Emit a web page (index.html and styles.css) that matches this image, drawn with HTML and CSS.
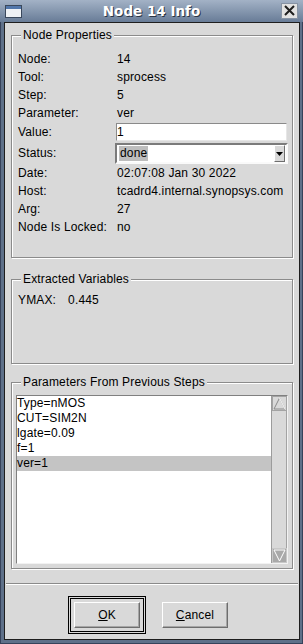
FILE: index.html
```html
<!DOCTYPE html>
<html lang="en">
<head>
  <meta charset="UTF-8">
  <meta name="viewport" content="width=device-width, initial-scale=1.0">
  <title>Node 14 Info</title>
  <link rel="stylesheet" href="styles.css">
</head>
<body>

  <div class="window">
    <!-- Title bar -->
    <div class="titlebar">
      <svg class="win-icon" width="17" height="13" viewBox="0 0 17 13">
        <rect x="0.5" y="0.5" width="16" height="12" fill="#eef1f5" stroke="#3a485c"/>
        <rect x="1" y="1" width="15" height="3" fill="#5277ab"/>
      </svg>
      <span class="title">Node 14 Info</span>
      <svg class="close-btn" width="17" height="16" viewBox="0 0 17 16">
        <rect x="0.5" y="0.5" width="16" height="15" fill="#e2e2e2" stroke="#8793a4"/>
        <path d="M4 3 L13 12 M13 3 L4 12" stroke="#1e1e1e" stroke-width="2"/>
      </svg>
    </div>

    <div class="client">
      <!-- Node Properties -->
      <fieldset class="group props">
        <legend>Node Properties</legend>
        <div class="prop-grid">
          <span>Node:</span><span class="val">14</span>
          <span>Tool:</span><span class="val">sprocess</span>
          <span>Step:</span><span class="val">5</span>
          <span>Parameter:</span><span class="val">ver</span>
          <span>Value:</span><div class="text-input">1</div>
          <span>Status:</span>
          <div class="select">
            <span class="sel-text">done</span>
            <span class="arrow-btn">
              <svg width="7" height="4" viewBox="0 0 7 4"><path d="M0 0 H7 L3.5 4 Z" fill="#000"/></svg>
            </span>
          </div>
          <span>Date:</span><span class="val">02:07:08 Jan 30 2022</span>
          <span>Host:</span><span class="val">tcadrd4.internal.synopsys.com</span>
          <span>Arg:</span><span class="val">27</span>
          <span>Node Is Locked:</span><span class="val">no</span>
        </div>
      </fieldset>

      <!-- Extracted Variables -->
      <fieldset class="group extracted">
        <legend>Extracted Variables</legend>
        <div class="var-line"><span>YMAX:</span><span class="var-val">0.445</span></div>
      </fieldset>

      <!-- Parameters From Previous Steps -->
      <fieldset class="group params">
        <legend>Parameters From Previous Steps</legend>
        <div class="listbox">
          <div class="items">
            <div class="item">Type=nMOS</div>
            <div class="item">CUT=SIM2N</div>
            <div class="item">lgate=0.09</div>
            <div class="item">f=1</div>
            <div class="item selected">ver=1</div>
          </div>
          <div class="scrollbar">
            <svg class="sb-btn" width="15" height="15" viewBox="0 0 15 15">
              <rect x="0.5" y="0.5" width="14" height="14" fill="#d9d9d9" stroke="#a3a3a3"/>
              <path d="M7.5 2 L13 13 H2 Z" fill="none" stroke="#8a8a8a"/>
              <path d="M7.5 2 L13 13" fill="none" stroke="#fff"/>
            </svg>
            <div class="sb-trough"></div>
            <svg class="sb-btn" width="15" height="15" viewBox="0 0 15 15">
              <rect x="0.5" y="0.5" width="14" height="14" fill="#a9a9a9" stroke="#c8c8c8"/>
              <path d="M2 2 H13 L7.5 13 Z" fill="none" stroke="#fff"/>
            </svg>
          </div>
        </div>
      </fieldset>

      <div class="sep"></div>

      <!-- Buttons -->
      <div class="buttons">
        <div class="default-ring">
          <div class="ring-inner">
            <button class="btn"><u>O</u>K</button>
          </div>
        </div>
        <button class="btn cancel"><u>C</u>ancel</button>
      </div>
    </div>
  </div>

</body>
</html>
```

FILE: styles.css
```css
body {
  margin: 0;
  padding: 0;
  font-family: "Liberation Sans", Arial, sans-serif;
  font-size: 12px;
  letter-spacing: 0.15px;
  color: #000;
}

.window {
  width: 303px;
  height: 644px;
  box-sizing: border-box;
  background-color: #5e7089;
  box-shadow: inset 1px 0 0 #36425a, inset -1px -1px 0 #36425a;
  display: flex;
  flex-direction: column;
}

/* Title bar */
.titlebar {
  height: 22px;
  flex: none;
  display: flex;
  align-items: center;
  padding: 0 5px;
  background: linear-gradient(#a3b2c6, #687c97);
}

.win-icon,
.close-btn {
  flex: none;
  display: block;
}

.title {
  flex: 1;
  text-align: center;
  color: #fff;
  font-family: "DejaVu Sans", sans-serif;
  font-weight: bold;
  font-size: 13.5px;
  letter-spacing: 0;
  text-shadow: 1px 1px 0 #2b3545;
}

/* Client area */
.client {
  flex: 1;
  margin: 0 3px 4px 4px;
  border: 1px solid #1e1e1e;
  background-color: #d9d9d9;
  display: flex;
  flex-direction: column;
}

.group {
  box-sizing: border-box;
  margin: 0 6px;
  border: 1px solid #8b8b8b;
  box-shadow: inset 1px 1px 0 #fff, 1px 1px 0 #fff;
  min-width: 0;
}

.group legend {
  padding: 0 2px;
  margin-left: 3px;
  line-height: 14px;
  background-color: #d9d9d9;
}

.props {
  margin-top: 5px;
  height: 230px;
  padding: 8px 5px 0 6px;
}

.extracted {
  margin-top: 14px;
  height: 92px;
  padding: 5px 6px 0 6px;
}

.params {
  margin-top: 11px;
  height: 194px;
  padding: 6px 4px 0 4px;
}

.params legend {
  margin-left: 5px;
}

/* Property rows */
.prop-grid {
  display: grid;
  grid-template-columns: 98px 1fr;
  grid-template-rows: 18px 18px 18px 18px 20px 22px 18px 18px 18px 18px;
  align-items: center;
}

.prop-grid .val {
  padding-left: 1px;
}

.text-input {
  height: 18px;
  box-sizing: border-box;
  border: 1px solid;
  border-color: #8a8a8a #e6e6e6 #e6e6e6 #8a8a8a;
  background-color: #fff;
  line-height: 16px;
}

.select {
  align-self: start;
  margin: 1px -1px 0 -1px;
  height: 21px;
  box-sizing: border-box;
  border: 2px solid;
  border-color: #7b7b7b #fafafa #fafafa #7b7b7b;
  background-color: #fff;
  display: flex;
  align-items: center;
  padding-left: 2px;
}

.sel-text {
  background-color: #bdbdbd;
  padding: 0 1px;
  line-height: 15px;
}

.arrow-btn {
  margin-left: auto;
  margin-right: 1px;
  width: 11px;
  height: 17px;
  box-sizing: border-box;
  background-color: #d9d9d9;
  border: 1px solid;
  border-color: #fff #6e6e6e #6e6e6e #fff;
  display: flex;
  align-items: center;
  justify-content: center;
}

.arrow-btn svg {
  display: block;
}

/* Extracted variables */
.var-line {
  line-height: 18px;
}

.var-val {
  margin-left: 12px;
}

/* Listbox */
.listbox {
  display: flex;
  height: 169px;
  box-sizing: border-box;
  border: 1px solid;
  border-color: #808080 #f2f2f2 #f2f2f2 #808080;
  background-color: #fff;
}

.items {
  flex: 1;
}

.item {
  height: 15px;
  line-height: 15px;
}

.item.selected {
  background-color: #c4c4c4;
}

.scrollbar {
  width: 16px;
  box-sizing: border-box;
  border-left: 1px solid #9c9c9c;
  background-color: #d9d9d9;
  display: flex;
  flex-direction: column;
}

.sb-btn {
  display: block;
  flex: none;
}

.sb-trough {
  flex: 1;
  border-right: 1px solid #a3a3a3;
}

/* Separator and buttons */
.sep {
  margin: 14px 1px 0 1px;
  border-top: 1px solid #8a8a8a;
  border-bottom: 1px solid #fff;
}

.buttons {
  margin-top: 11px;
  padding-left: 63px;
  display: flex;
  align-items: center;
}

.default-ring {
  border: 1px solid #000;
  padding: 1px;
}

.ring-inner {
  border: 1px solid #000;
  padding: 3px;
}

.btn {
  display: block;
  width: 66px;
  height: 26px;
  margin: 0;
  padding: 0;
  box-sizing: border-box;
  font-family: "Liberation Sans", Arial, sans-serif;
  font-size: 12px;
  letter-spacing: 0.15px;
  color: #000;
  background-color: #d9d9d9;
  border: 1px solid;
  border-color: #fff #6e6e6e #6e6e6e #fff;
  box-shadow: inset -1px -1px 0 #a6a6a6;
}

.cancel {
  margin-left: 16px;
}
```
